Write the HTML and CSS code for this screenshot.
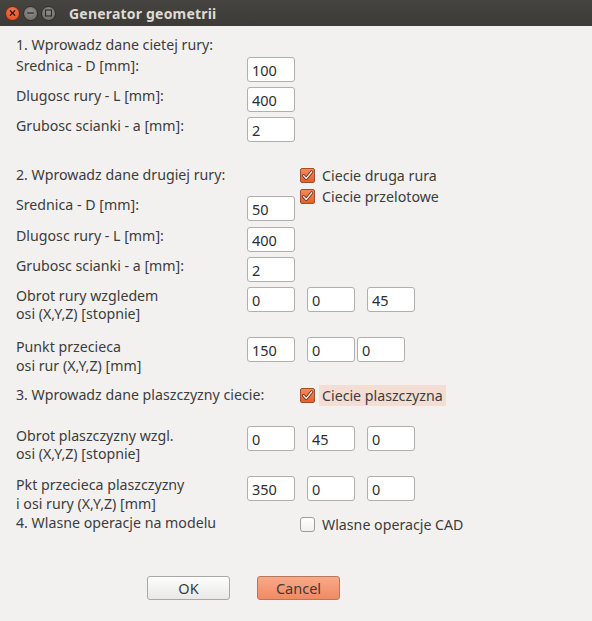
FILE: index.html
```html
<!DOCTYPE html>
<html>
<head>
<meta charset="utf-8">
<link rel="stylesheet" href="styles.css">
</head>
<body>
<div class="window">
  <div class="titlebar">
    <div class="wbtns">
      <span class="wbtn close"><svg width="14" height="14" viewBox="0 0 14 14"><path d="M4.6 4.6 L9.4 9.4 M9.4 4.6 L4.6 9.4" stroke="#3a1a10" stroke-width="1.4" stroke-linecap="round"/></svg></span>
      <span class="wbtn"><svg width="14" height="14" viewBox="0 0 14 14"><path d="M3.5 7 H10.5" stroke="#2e2d2a" stroke-width="1.4"/></svg></span>
      <span class="wbtn"><svg width="14" height="14" viewBox="0 0 14 14"><rect x="3.8" y="3.8" width="6.4" height="6.4" fill="none" stroke="#2e2d2a" stroke-width="1.2"/></svg></span>
    </div>
    <div class="title">Generator geometrii</div>
  </div>
  <div class="content">
    <div class="heading s1">1. Wprowadz dane cietej rury:</div>
    <div class="row m3"><div class="label">Srednica - D [mm]:</div><input class="field" value="100"></div>
    <div class="row m5"><div class="label">Dlugosc rury - L [mm]:</div><input class="field" value="400"></div>
    <div class="row m5"><div class="label">Grubosc scianki - a [mm]:</div><input class="field" value="2"></div>

    <div class="split s2">
      <div class="leftcol">
        <div class="heading">2. Wprowadz dane drugiej rury:</div>
        <div class="row m12"><div class="label">Srednica - D [mm]:</div><input class="field" value="50"></div>
      </div>
      <div class="checks">
        <label class="check"><span class="box on"><svg width="13" height="13" viewBox="0 0 13 13"><path d="M2.5 6.5 L5.2 9.5 L10.8 2.8" fill="none" stroke="#5a2d18" stroke-width="3" stroke-linecap="round" stroke-linejoin="round"/><path d="M2.5 6.5 L5.2 9.5 L10.8 2.8" fill="none" stroke="#fbe9df" stroke-width="1.4" stroke-linecap="round" stroke-linejoin="round"/></svg></span><span class="ctext">Ciecie druga rura</span></label>
        <label class="check"><span class="box on"><svg width="13" height="13" viewBox="0 0 13 13"><path d="M2.5 6.5 L5.2 9.5 L10.8 2.8" fill="none" stroke="#5a2d18" stroke-width="3" stroke-linecap="round" stroke-linejoin="round"/><path d="M2.5 6.5 L5.2 9.5 L10.8 2.8" fill="none" stroke="#fbe9df" stroke-width="1.4" stroke-linecap="round" stroke-linejoin="round"/></svg></span><span class="ctext">Ciecie przelotowe</span></label>
      </div>
    </div>
    <div class="row m6"><div class="label">Dlugosc rury - L [mm]:</div><input class="field" value="400"></div>
    <div class="row m5"><div class="label">Grubosc scianki - a [mm]:</div><input class="field" value="2"></div>
    <div class="row two m5"><div class="label">Obrot rury wzgledem<br>osi (X,Y,Z) [stopnie]</div><div class="fields"><input class="field" value="0"><input class="field" value="0"><input class="field" value="45"></div></div>
    <div class="row two tall m14"><div class="label">Punkt przecieca<br>osi rur (X,Y,Z) [mm]</div><div class="fields tight"><input class="field" value="150"><input class="field" value="0"><input class="field" value="0"></div></div>

    <div class="split s3">
      <div class="leftcol"><div class="heading">3. Wprowadz dane plaszczyzny ciecie:</div></div>
      <div class="checks">
        <label class="check"><span class="box on"><svg width="13" height="13" viewBox="0 0 13 13"><path d="M2.5 6.5 L5.2 9.5 L10.8 2.8" fill="none" stroke="#5a2d18" stroke-width="3" stroke-linecap="round" stroke-linejoin="round"/><path d="M2.5 6.5 L5.2 9.5 L10.8 2.8" fill="none" stroke="#fbe9df" stroke-width="1.4" stroke-linecap="round" stroke-linejoin="round"/></svg></span><span class="ctext hl">Ciecie plaszczyzna</span></label>
      </div>
    </div>
    <div class="row two m20"><div class="label pt1">Obrot plaszczyzny wzgl.<br>osi (X,Y,Z) [stopnie]</div><div class="fields"><input class="field" value="0"><input class="field" value="45"><input class="field" value="0"></div></div>
    <div class="row two tall m13"><div class="label">Pkt przecieca plaszczyzny<br>i osi rury (X,Y,Z) [mm]</div><div class="fields pt1"><input class="field" value="350"><input class="field" value="0"><input class="field" value="0"></div></div>

    <div class="split s4">
      <div class="leftcol"><div class="heading">4. Wlasne operacje na modelu</div></div>
      <div class="checks">
        <label class="check"><span class="box"></span><span class="ctext">Wlasne operacje CAD</span></label>
      </div>
    </div>

    <div class="buttons">
      <button class="btn ok">OK</button>
      <button class="btn cancel">Cancel</button>
    </div>
  </div>
</div>
</body>
</html>
```

FILE: styles.css
```css
* { box-sizing: border-box; }
html, body { margin: 0; padding: 0; }
body {
  width: 592px;
  height: 621px;
  overflow: hidden;
  background: #f2f1f0;
  font-family: "Noto Sans", "DejaVu Sans", sans-serif;
  font-size: 14.2px;
  color: #3c3c3c;
}
.window { width: 592px; height: 621px; background: #f2f1f0; }
.titlebar {
  height: 26px;
  background: linear-gradient(#45443f, #3c3b37);
  display: flex;
  align-items: center;
  padding-left: 5px;
}
.wbtns { display: flex; gap: 3px; }
.wbtn {
  width: 15px; height: 15px; border-radius: 50%;
  background: radial-gradient(circle at 50% 35%, #8e8d88, #6a6964);
  border: 1px solid #2f2e2b;
  display: flex; align-items: center; justify-content: center;
}
.wbtn svg { display: block; }
.wbtn.close { background: radial-gradient(circle at 50% 35%, #f47a50, #df4a1c); border-color: #6b2a14; }
.title {
  margin-left: 13px;
  color: #dfdbd2;
  font-weight: bold;
  font-size: 14px;
  letter-spacing: 0.2px;
}
.content { padding: 10px 0 0 16px; }
.heading { height: 18px; line-height: 18px; white-space: nowrap; }
.row { display: flex; align-items: flex-start; height: 25px; }
.row.two { height: 36px; }
.row.tall { height: 36px; }
.label { width: 231px; line-height: 18px; white-space: nowrap; }
.row.tall .label { line-height: 19px; }
.pt1 { padding-top: 1px; }
.field {
  width: 48px; height: 25px;
  border: 1px solid #b0afab;
  border-radius: 3px;
  background: #fff;
  padding: 0 0 0 4px;
  margin: 0;
  font-family: "Noto Sans", "DejaVu Sans", sans-serif;
  font-size: 14.5px;
  color: #2e2e2e;
  outline: none;
}
.fields { display: flex; gap: 12px; }
.fields.tight .field:nth-child(3) { margin-left: -10px; }
.m3 { margin-top: 3px; }
.m5 { margin-top: 5px; }
.m6 { margin-top: 6px; }
.m12 { margin-top: 12px; }
.m13 { margin-top: 13px; }
.m14 { margin-top: 14px; }
.m20 { margin-top: 20px; }
.split { display: flex; align-items: flex-start; }
.s2 { margin-top: 24px; }
.s3 { margin-top: 13px; }
.s4 { margin-top: 3px; }
.leftcol { width: 284px; }
.checks { display: flex; flex-direction: column; }
.s2 .checks { margin-top: -1px; }
.s3 .checks { margin-top: -1px; }
.check { display: flex; align-items: center; height: 21px; }
.box {
  width: 15px; height: 15px;
  border: 1px solid #9d9c99;
  border-radius: 3px;
  background: linear-gradient(#ffffff, #f1f0ef);
  display: flex; align-items: center; justify-content: center;
}
.box.on {
  border-color: #a04d28;
  background: linear-gradient(#f5895b, #e5602b);
  border-radius: 2px;
}
.box svg { display: block; }
.ctext { margin-left: 7px; line-height: 18px; white-space: nowrap; }
.ctext.hl { background: #f4ddd2; margin-left: 4px; padding: 2px 3px 1px 3px; }
.buttons { display: flex; gap: 27px; margin-top: 41px; padding-left: 131px; }
.btn {
  width: 83px; height: 24px;
  border-radius: 3px;
  font-family: "Noto Sans", "DejaVu Sans", sans-serif;
  font-size: 14.5px;
  color: #3c3c3c;
  padding: 0;
  margin: 0;
}
.btn.ok { background: linear-gradient(#fdfdfd, #e9e8e7); border: 1px solid #a9a8a5; }
.btn.cancel { background: linear-gradient(#f9a988, #f08a63); border: 1px solid #b4775f; }
```
